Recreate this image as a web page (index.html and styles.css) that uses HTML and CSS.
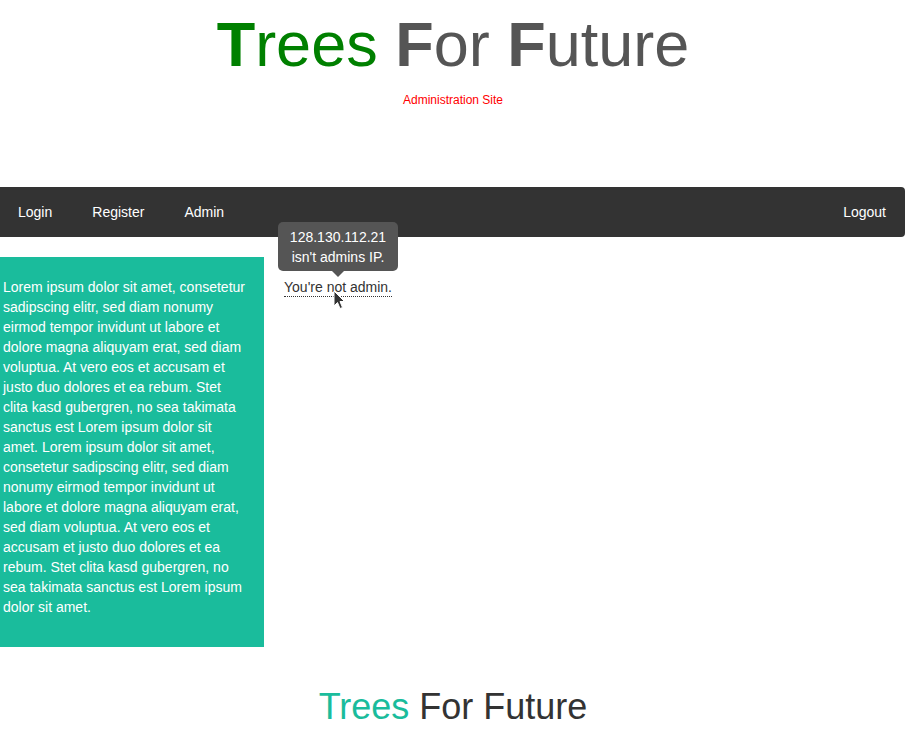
FILE: index.html
```html
<!DOCTYPE html>
<html lang="en">
<head>
<meta charset="utf-8">
<title>Trees For Future - Administration</title>
<link rel="stylesheet" href="styles.css">
</head>
<body>
<header class="site-header">
  <h1 class="site-title"><span class="green"><b>T</b>rees</span> <span class="grey"><b>F</b>or <b>F</b>uture</span></h1>
  <p class="subtitle">Administration Site</p>
</header>

<nav class="navbar">
  <ul class="nav-left">
    <li><a href="#">Login</a></li>
    <li><a href="#">Register</a></li>
    <li><a href="#">Admin</a></li>
  </ul>
  <ul class="nav-right">
    <li><a href="#">Logout</a></li>
  </ul>
</nav>

<main class="content">
  <aside class="sidebar">
    <p>Lorem ipsum dolor sit amet, consetetur sadipscing elitr, sed diam nonumy eirmod tempor invidunt ut labore et dolore magna aliquyam erat, sed diam voluptua. At vero eos et accusam et justo duo dolores et ea rebum. Stet clita kasd gubergren, no sea takimata sanctus est Lorem ipsum dolor sit amet. Lorem ipsum dolor sit amet, consetetur sadipscing elitr, sed diam nonumy eirmod tempor invidunt ut labore et dolore magna aliquyam erat, sed diam voluptua. At vero eos et accusam et justo duo dolores et ea rebum. Stet clita kasd gubergren, no sea takimata sanctus est Lorem ipsum dolor sit amet.</p>
  </aside>
  <section class="main-col">
    <p class="notice"><span class="hint">You're not admin.<span class="tooltip">128.130.112.21<br>isn't admins IP.</span><svg class="cursor" width="13" height="20" viewBox="0 0 13 20"><path d="M1 1 L1 16 L4.5 12.5 L7 18.5 L9.5 17.5 L7 11.5 L11.5 11.5 Z" fill="#333" stroke="#fff" stroke-width="1" stroke-linejoin="round"/></svg></span></p>
  </section>
</main>

<footer class="site-footer">
  <h2 class="footer-title"><span class="teal">Trees</span> For Future</h2>
</footer>
</body>
</html>
```

FILE: styles.css
```css
html, body {
  margin: 0;
  padding: 0;
  background: #fff;
}

body {
  font-family: "Liberation Sans", Arial, Helvetica, sans-serif;
  font-size: 14px;
  line-height: 20px;
  color: #333;
  overflow-x: hidden;
}

.site-header {
  text-align: center;
}

.site-title {
  margin: 0;
  padding-top: 13px;
  font-size: 63px;
  line-height: 63px;
  font-weight: normal;
}

.site-title b {
  font-weight: bold;
}

.green {
  color: #008000;
}

.grey {
  color: #555;
}

.subtitle {
  margin: 16px 0 0;
  font-size: 12px;
  line-height: 16px;
  color: #ff0000;
}

.navbar {
  margin: 79px 1px 0 -4px;
  height: 50px;
  padding: 0 19px 0 22px;
  background: #333;
  border-radius: 4px;
  display: flex;
  justify-content: space-between;
  align-items: center;
}

.nav-left, .nav-right {
  list-style: none;
  margin: 0;
  padding: 0;
  display: flex;
  gap: 40px;
}

.navbar a {
  color: #fff;
  text-decoration: none;
  font-size: 14px;
  line-height: 20px;
}

.content {
  display: flex;
  margin-top: 20px;
  align-items: flex-start;
}

.sidebar {
  width: 264px;
  box-sizing: border-box;
  flex: none;
  padding: 20px 18px 30px 3px;
  background: #1abc9c;
  color: #fff;
}

.sidebar p {
  margin: 0;
}

.main-col {
  flex: 1;
  margin-left: 20px;
  padding-top: 20px;
}

.notice {
  margin: 0;
}

.hint {
  position: relative;
  border-bottom: 1px dotted #333;
  padding-bottom: 1px;
}

.tooltip {
  position: absolute;
  left: 50%;
  bottom: calc(100% + 8px);
  transform: translateX(-50%);
  width: 120px;
  box-sizing: border-box;
  padding: 5px 0 4px;
  background: #555;
  color: #fff;
  text-align: center;
  border-radius: 5px;
  white-space: nowrap;
}

.tooltip::after {
  content: "";
  position: absolute;
  top: 100%;
  left: 50%;
  margin-left: -6px;
  border-width: 6px 6px 0;
  border-style: solid;
  border-color: #555 transparent transparent;
}

.cursor {
  position: absolute;
  left: 49px;
  top: 11px;
}

.site-footer {
  text-align: center;
  margin-top: 40px;
}

.footer-title {
  margin: 0;
  font-size: 36px;
  line-height: 40px;
  font-weight: normal;
  color: #333;
}

.teal {
  color: #1abc9c;
}
```
